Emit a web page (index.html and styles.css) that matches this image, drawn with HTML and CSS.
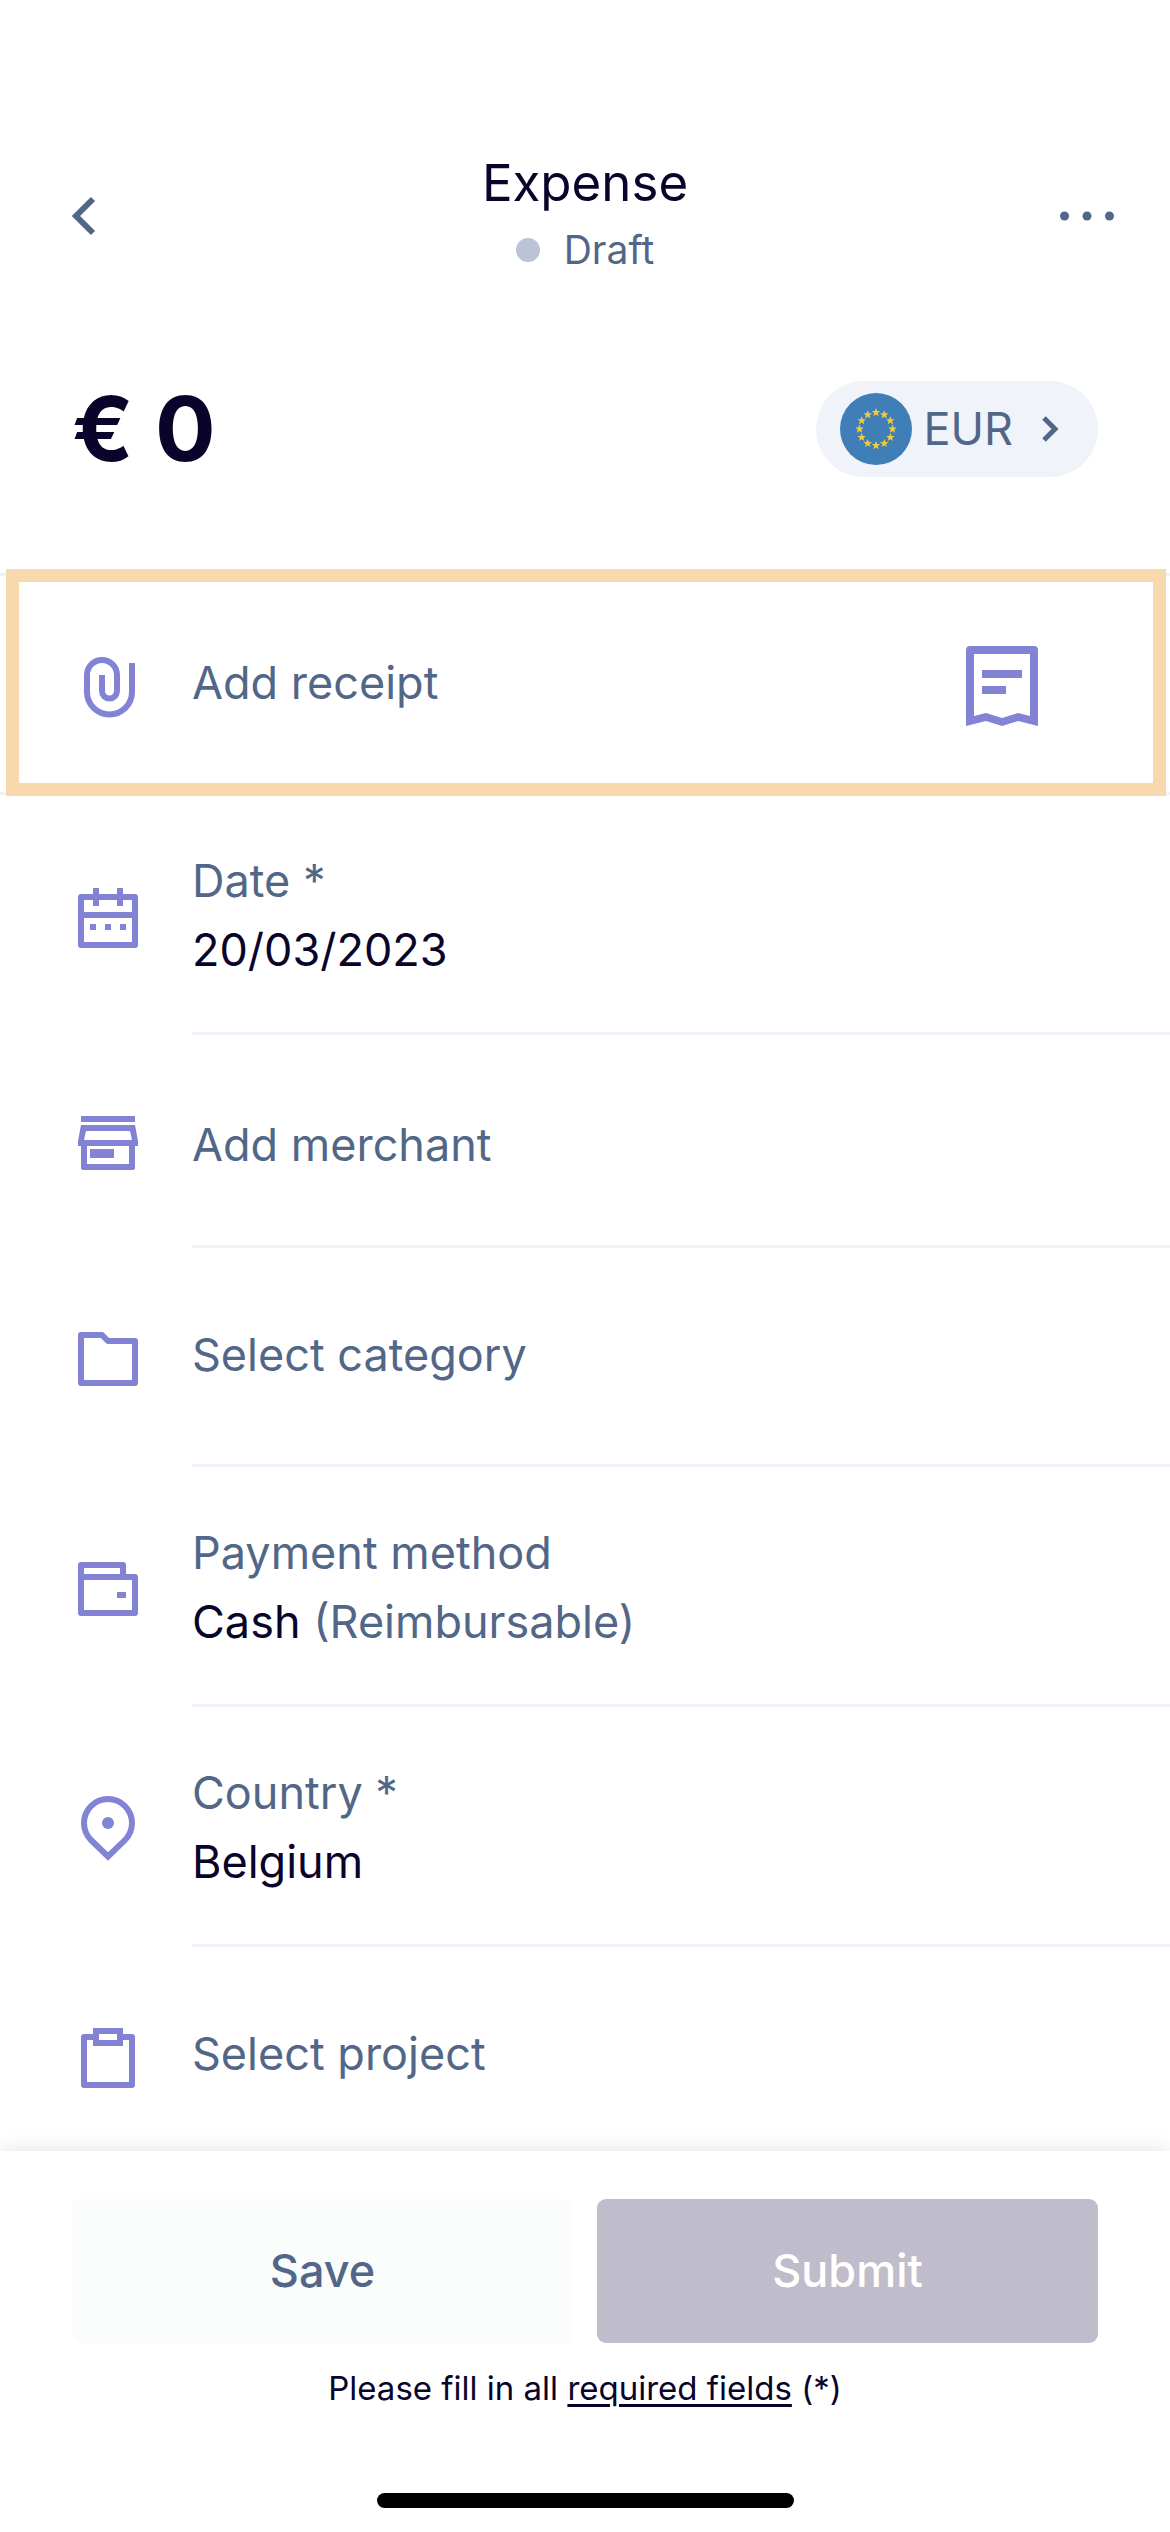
FILE: index.html
```html
<!DOCTYPE html>
<html lang="en">
	<head>
		<meta charset="utf-8" />
		<meta name="viewport" content="width=device-width, initial-scale=1" />
		<title>Expense</title>
		<link rel="stylesheet" href="styles.css">
	</head>
	<body>
		<header class="topbar">
			<button type="button" class="icon-button back" aria-label="Back">
				<svg width="24" height="40" viewBox="0 0 24 40"><path d="M21 3L4 20l17 17" /></svg>
			</button>
			<div class="heading">
				<h1>Expense</h1>
				<p class="status"><span class="dot"></span>Draft</p>
			</div>
			<button type="button" class="icon-button more" aria-label="More options">
				<svg width="54" height="40" viewBox="0 0 54 40">
					<circle cx="4.5" cy="20" r="4.5" /><circle cx="27" cy="20" r="4.5" /><circle cx="49.5" cy="20" r="4.5" />
				</svg>
			</button>
		</header>

		<section class="amount">
			<strong>€ 0</strong>
			<button type="button" class="currency">
				<svg class="flag" width="72" height="72" viewBox="-36 -36 72 72">
					<defs>
						<path id="star" d="M0-4.4L1.2-1.4 4.3-1.4 1.8.6 2.7 3.7 0 1.9-2.7 3.7-1.8.6-4.3-1.4-1.2-1.4z" />
					</defs>
					<circle r="36" fill="#407eb8" />
					<g fill="#f0cb3c">
						<use href="#star" x="0" y="-16.5" />
						<use href="#star" x="8.3" y="-14.3" />
						<use href="#star" x="14.3" y="-8.3" />
						<use href="#star" x="16.5" y="0" />
						<use href="#star" x="14.3" y="8.3" />
						<use href="#star" x="8.3" y="14.3" />
						<use href="#star" x="0" y="16.5" />
						<use href="#star" x="-8.3" y="14.3" />
						<use href="#star" x="-14.3" y="8.3" />
						<use href="#star" x="-16.5" y="0" />
						<use href="#star" x="-14.3" y="-8.3" />
						<use href="#star" x="-8.3" y="-14.3" />
					</g>
				</svg>
				<span class="code">EUR</span>
				<svg class="chevron" width="18" height="26" viewBox="0 0 18 26"><path d="M3 2l11 11L3 24" /></svg>
			</button>
		</section>

		<form id="expense" class="fields">
			<button type="button" class="field receipt">
				<svg class="icon" width="72" height="72" viewBox="0 0 72 72">
					<path d="M30 28v16a7.5 7.5 0 0 0 15 0V28a15 15 0 0 0-30 0v17a22.5 22.5 0 0 0 45 0V16" />
				</svg>
				<span class="text">Add receipt</span>
				<svg class="icon" width="72" height="86" viewBox="0 0 72 86">
					<path class="solid" fill-rule="evenodd" d="M4 6h64a4 4 0 0 1 4 4v76l-20-5-16 5-16-5-20 5V10a4 4 0 0 1 4-4zM8 14v62l12-3 16 5 16-5 12 3V14zM16 30h40v8H16zM16 46h24v8H16z" />
				</svg>
			</button>

			<label class="field double">
				<svg class="icon" width="72" height="72" viewBox="0 0 72 72">
					<path d="M9 18h54v48H9zM9 36h54M24 9v18M48 9v18" />
					<path class="solid" d="M18 45h6v6h-6zM33 45h6v6h-6zM48 45h6v6h-6z" />
				</svg>
				<span class="text">
					Date *
					<input type="text" name="date" value="20/03/2023" />
				</span>
			</label>

			<button type="button" class="field short">
				<svg class="icon" width="72" height="72" viewBox="0 0 72 72">
					<path class="solid" fill-rule="evenodd" d="M9 7h54v6H9zM9 16h54l3 16v5h-3v22a2 2 0 0 1-2 2H11a2 2 0 0 1-2-2V37H6v-5zM14 22l-2 9h48l-2-9zM15 37v18h42V37zM18 40h24v9H18z" />
				</svg>
				<span class="text">Add merchant</span>
			</button>

			<button type="button" class="field">
				<svg class="icon" width="72" height="72" viewBox="0 0 72 72">
					<path d="M9 16h21l6 6h27v42H9z" />
				</svg>
				<span class="text">Select category</span>
			</button>

			<button type="button" class="field double">
				<svg class="icon" width="72" height="72" viewBox="0 0 72 72">
					<path d="M9 26h54v36H9zM9 26V14h42v12" />
					<path class="solid" d="M45 41h9v6h-9z" />
				</svg>
				<span class="text">
					Payment method
					<span class="value">Cash <small>(Reimbursable)</small></span>
				</span>
			</button>

			<button type="button" class="field double">
				<svg class="icon" width="72" height="72" viewBox="0 0 72 72">
					<path stroke-linejoin="miter" d="M36 65.5L19 49a24 24 0 1 1 34 0z" />
					<circle class="solid" cx="36" cy="32" r="6" />
				</svg>
				<span class="text">
					Country *
					<span class="value">Belgium</span>
				</span>
			</button>

			<button type="button" class="field">
				<svg class="icon" width="72" height="72" viewBox="0 0 72 72">
					<path d="M24 19H12v48h48V19H48" />
					<path d="M24 13h24v12H24z" stroke-linejoin="miter" />
				</svg>
				<span class="text">Select project</span>
			</button>
		</form>

		<footer class="actions">
			<div class="buttons">
				<button type="button" class="save">Save</button>
				<button type="submit" form="expense" class="submit" disabled>Submit</button>
			</div>
			<p>Please fill in all <a href="#expense">required fields</a> (*)</p>
			<div class="home-bar"></div>
		</footer>
	</body>
</html>
```

FILE: styles.css
```css
* { box-sizing: border-box; }
html, body { height: 100%; }
body {
	display: flex;
	flex-direction: column;
	margin: 0;
	background: #fff;
	color: #09042a;
	font-family: Inter, Roboto, "Liberation Sans", sans-serif;
	font-size: 45px;
	line-height: 69px;
}
h1, p { margin: 0; }
button, input {
	margin: 0; padding: 0;
	border: 0;
	background: none;
	color: inherit;
	font: inherit;
}
svg { display: block; flex: none; }

/* header */
.topbar {
	display: grid;
	grid-template-columns: 1fr auto 1fr;
	align-items: center;
	padding: 148px 56px 0;
}
.heading { text-align: center; }
h1 { font-size: 51px; font-weight: 400; }
.status {
	display: flex;
	align-items: center;
	justify-content: center;
	gap: 24px;
	color: #526788;
	font-size: 39px;
	line-height: 66px;
}
.dot {
	width: 24px; height: 24px;
	border-radius: 50%;
	background: #bac4d6;
}
.back { justify-self: start; padding-left: 16px; }
.back svg {
	fill: none;
	stroke: #526788;
	stroke-width: 6;
}
.more { justify-self: end; }
.more svg { fill: #526788; }

/* amount */
.amount {
	display: flex;
	align-items: center;
	justify-content: space-between;
	padding: 98px 72px 96px;
	border-bottom: 3px solid #f0f3f9;
}
.amount strong {
	font-size: 90px;
	font-weight: 700;
	line-height: 96px;
}
.currency {
	display: flex;
	align-items: center;
	height: 96px;
	padding: 0 39px 0 24px;
	border-radius: 48px;
	background: #f0f3f9;
	color: #526788;
}
.code { padding-bottom: 2px; }
.flag { margin-right: 12px; }
.chevron {
	margin-left: 28px;
	fill: none;
	stroke: #526788;
	stroke-width: 5;
}

/* fields */
.fields {
	flex: 1;
	min-height: 0;
	overflow: hidden;
	margin-top: -7px;
	padding-top: 7px;
}
.field {
	display: flex;
	align-items: center;
	gap: 48px;
	width: 100%;
	padding: 71px 0 76px 72px;
	background: linear-gradient(#f0f3f9, #f0f3f9) 192px 100% / 100% 3px no-repeat;
	color: #526788;
	text-align: left;
}
.field.double { padding-top: 51px; padding-bottom: 51px; }
.field.short { padding-top: 74px; padding-bottom: 67px; }
.field.receipt {
	position: relative;
	padding: 64px 132px 69px 72px;
	background-position: 0 100%;
}
.field.receipt::after {
	content: "";
	position: absolute;
	top: -7px; right: 4px; bottom: -1px; left: 6px;
	border: 13px solid #f8d9ad;
}
.text { flex: 1; padding-bottom: 2px; }
.double .text { padding-bottom: 0; }
.field input, .value {
	display: block;
	width: 100%;
	height: 69px;
	color: #09042a;
}
.value small { color: #526788; font-size: inherit; }
.icon {
	fill: none;
	stroke: #8283d4;
	stroke-width: 6;
	stroke-linejoin: round;
}
.icon .solid { fill: #8283d4; stroke: none; }

/* footer */
.actions {
	position: relative;
	padding: 48px 72px 24px;
	background: #fff;
	box-shadow: 0 0 20px rgba(9,4,42,0.12);
}
.buttons { display: flex; gap: 24px; }
.buttons button {
	flex: 1;
	height: 144px;
	padding-bottom: 2px;
	border-radius: 9px;
	font-weight: 500;
}
.save { background: #fbfcfc; color: #526788; }
.submit { background: #bfbdcc; color: #fff; }
.actions p {
	margin-top: 23px;
	font-size: 33px;
	line-height: 45px;
	text-align: center;
}
.actions a { color: inherit; text-underline-offset: 4px; }
.home-bar {
	width: 417px;
	max-width: 100%;
	height: 15px;
	margin: 82px auto 0;
	border-radius: 8px;
	background: #000;
}
```
